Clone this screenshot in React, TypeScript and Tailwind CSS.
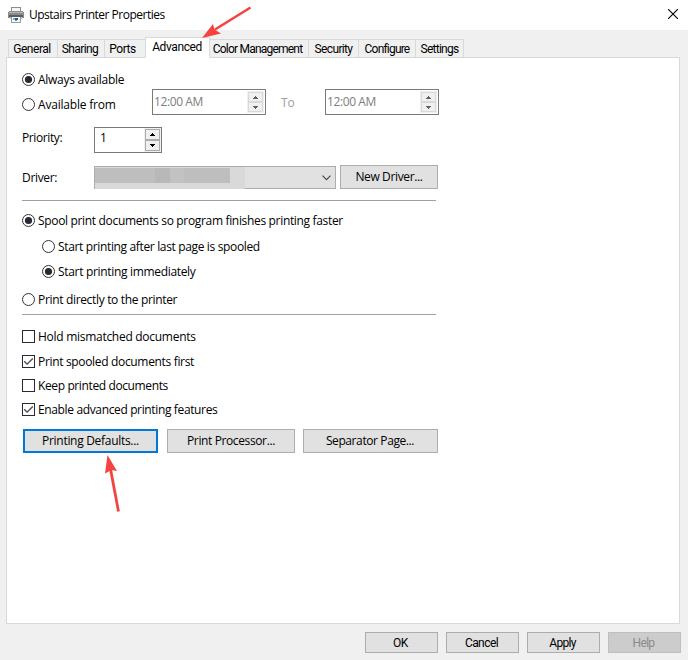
import type { ReactNode } from "react";
import clsx from "clsx";

const tabs = [
    { label: "General", width: "w-[50px]", text: "tracking-[-0.45px] pr-0.5" },
    { label: "Sharing", width: "w-[48px]", text: "tracking-[-0.6px] pr-0.5" },
    { label: "Ports", width: "w-[42px]", text: "tracking-[-0.5px] pr-[5px]" },
    { label: "Advanced", width: "w-[65px]", text: "tracking-[-0.4px] pr-px pb-0.5", active: true },
    { label: "Color Management", width: "w-[100px]", text: "tracking-[-0.78px] pr-[3px]" },
    { label: "Security", width: "w-[51px]", text: "tracking-[-0.65px]" },
    { label: "Configure", width: "w-[58px]", text: "tracking-[-0.8px]" },
    { label: "Settings", width: "w-[49px]", text: "tracking-[-0.75px]" },
];

const footerButtons = [
    { label: "OK", disabled: false, text: "tracking-[-0.4px]" },
    { label: "Cancel", disabled: false, text: "tracking-[-0.55px]" },
    { label: "Apply", disabled: false, text: "tracking-[-0.7px]" },
    { label: "Help", disabled: true, text: "tracking-[-0.7px]" },
];

function PrinterIcon() {
    return (
        <svg width="16" height="16" viewBox="0 0 16 16" className="shrink-0" shapeRendering="crispEdges">
            <path d="M3 0h10v5H3z" fill="#8c8c8c" />
            <path d="M4 1h8v4H4z" fill="#f4f4f4" />
            <path d="M1 4h14v1H1zM0 5h16v6H0z" fill="#8b8d8c" />
            <path d="M1 5h14v1H1z" fill="#b4b6b5" />
            <path d="M1 8h14v2H1z" fill="#5c5e5e" />
            <path d="M2 10h12v2H2z" fill="#c3c5c5" />
            <path d="M3 10h10v6H3z" fill="#9a9c9c" />
            <path d="M4 10h8v5H4z" fill="#f7fafc" />
            <path d="M5 11h3v2H5z" fill="#63b5e8" />
            <path d="M7 11h3v2H7z" fill="#1d5f9e" />
            <path d="M7 13h2v1H7z" fill="#6f9c6a" />
        </svg>
    );
}

function Radio({ label, checked, className }: { label: string; checked?: boolean; className?: string }) {
    return (
        <label className="flex h-[13px] items-center gap-[3px]">
            <svg width="13" height="13" viewBox="0 0 13 13" className="shrink-0">
                <circle cx="6.5" cy="6.5" r="6" fill="#fff" stroke="#333" />
                {checked && <circle cx="6.5" cy="6.5" r="3.6" fill="#2b2733" />}
            </svg>
            <span className={clsx("leading-[13px] whitespace-nowrap", className)}>{label}</span>
        </label>
    );
}

function Checkbox({ label, checked, className }: { label: string; checked?: boolean; className?: string }) {
    return (
        <label className="flex h-[13px] items-center gap-[3px]">
            <svg width="13" height="13" viewBox="0 0 13 13" className="shrink-0">
                <rect x="0.5" y="0.5" width="12" height="12" fill="#fff" stroke="#2b2733" />
                {checked && <path d="M2.2 6.3l2.9 2.9 5.7-5.7" fill="none" stroke="#444" strokeWidth="1.3" />}
            </svg>
            <span className={clsx("leading-[13px] whitespace-nowrap", className)}>{label}</span>
        </label>
    );
}

function Spinner({ disabled }: { disabled?: boolean }) {
    const button = clsx(
        "flex items-center justify-center border bg-[#f0f0f0]",
        disabled ? "border-[#d9d9d9]" : "border-[#acacac]",
    );
    const color = disabled ? "#606060" : "#000";
    return (
        <div className="grid h-full w-[17px] grid-rows-2 bg-[#f0f0f0] p-px">
            <div className={button}>
                <svg width="5" height="3" viewBox="0 0 5 3" shapeRendering="crispEdges">
                    <path d="M2 0h1v1h1v1h1v1H0V2h1V1h1z" fill={color} />
                </svg>
            </div>
            <div className={button}>
                <svg width="5" height="3" viewBox="0 0 5 3" shapeRendering="crispEdges">
                    <path d="M0 0h5v1H4v1H3v1H2V2H1V1H0z" fill={color} />
                </svg>
            </div>
        </div>
    );
}

function TimeField() {
    return (
        <div className="flex h-[26px] w-[114px] justify-between border border-[#7a7a7a] bg-white p-px text-[#7d7d7d]">
            <span className="leading-[22px] tracking-[-0.4px]">12:00 AM</span>
            <Spinner disabled />
        </div>
    );
}

function Button({ children, className }: { children: ReactNode; className?: string }) {
    return (
        <button
            className={clsx(
                "flex h-6 items-center justify-center bg-[#e1e1e1] whitespace-nowrap",
                className,
            )}
        >
            {children}
        </button>
    );
}

export default function App() {
    return (
        <div className="relative flex h-[660px] w-[688px] flex-col overflow-hidden bg-[#f0f0f0] font-['Open_Sans','Noto_Sans',sans-serif] text-[12px] text-black">
            <header className="flex h-[30px] shrink-0 items-start justify-between bg-white pt-[6px] pr-[10px] pl-2">
                <div className="flex items-center gap-[5px]">
                    <PrinterIcon />
                    <h1 className="pt-px leading-4 tracking-[-0.5px]">Upstairs Printer Properties</h1>
                </div>
                <svg width="10" height="10" viewBox="0 0 10 10" className="mt-[3px]">
                    <path d="M0 0l10 10M10 0L0 10" stroke="#000" strokeWidth="1.1" />
                </svg>
            </header>

            {/* Tab strip, the active tab covers the panel's top border */}
            <nav className="z-10 -mb-px flex h-7 shrink-0 items-end pl-2 font-['Roboto',sans-serif]">
                {tabs.map((tab) => (
                    <div
                        key={tab.label}
                        className={clsx(
                            "-mr-px flex shrink-0 items-center justify-center border border-[#d9d9d9] whitespace-nowrap",
                            tab.active ? "z-10 h-[21px] border-b-white bg-white" : "h-[19px] bg-[#f0f0f0]",
                            tab.width,
                            tab.text,
                        )}
                    >
                        {tab.label}
                    </div>
                ))}
            </nav>

            <main className="ml-[6px] h-[567px] w-[674px] shrink-0 border border-[#d9d9d9] bg-white pl-[15px]">
                <div className="flex h-[57px] pt-[15px]">
                    <div className="flex w-[130px] flex-col gap-3">
                        <Radio label="Always available" checked className="tracking-[-0.27px]" />
                        <Radio label="Available from" className="tracking-[-0.2px]" />
                    </div>
                    <div className="flex items-center gap-[15px] pt-4">
                        <TimeField />
                        <span className="w-[29px] pt-px text-[#a0a0a0]">To</span>
                        <TimeField />
                    </div>
                </div>

                <div className="mt-3 flex h-[26px]">
                    <span className="w-[72px] leading-[22px] tracking-[-0.4px]">Priority:</span>
                    <div className="flex h-[26px] w-[68px] justify-between border border-[#7a7a7a] pl-[5px]">
                        <span className="leading-5">1</span>
                        <Spinner />
                    </div>
                </div>

                <div className="mt-3 flex h-6 items-end">
                    <span className="w-[72px] leading-[23px] tracking-[-0.33px]">Driver:</span>
                    <div className="mr-1 flex h-[23px] w-[242px]">
                        {/* Masked driver name */}
                        <div className="h-[23px] w-[151px] border-t border-l border-[#adadad] bg-[#d9d9d9] pt-px">
                            <div className="flex h-[15px] w-[135px] bg-[#bebebe] pl-[60px]">
                                <div className="w-[15px] bg-[#b8b8b8]" />
                                <div className="w-[14px] bg-[#c2c2c2]" />
                            </div>
                        </div>
                        <div className="flex flex-1 items-center justify-end border border-l-0 border-[#adadad] bg-[#e1e1e1] pr-1">
                            <svg width="9" height="6" viewBox="0 0 9 6">
                                <path d="M0.5 0.7l4 4 4-4" fill="none" stroke="#444" strokeWidth="1.1" />
                            </svg>
                        </div>
                    </div>
                    <Button className="w-[98px] border border-[#adadad] tracking-[-0.36px]">New Driver...</Button>
                </div>

                <div className="mt-[11px] h-px w-[414px] bg-[#a0a0a0]" />

                <div className="mt-[13px]">
                    <Radio label="Spool print documents so program finishes printing faster" checked className="tracking-[-0.33px]" />
                    <div className="mt-[13px] flex flex-col gap-3 pl-5">
                        <Radio label="Start printing after last page is spooled" className="tracking-[-0.35px]" />
                        <Radio label="Start printing immediately" checked className="tracking-[-0.32px]" />
                    </div>
                    <div className="mt-[15px]">
                        <Radio label="Print directly to the printer" className="tracking-[-0.33px]" />
                    </div>
                </div>

                <div className="mt-2 h-px w-[414px] bg-[#a0a0a0]" />

                <div className="mt-[15px] flex flex-col gap-[11px]">
                    <div className="mb-px">
                        <Checkbox label="Hold mismatched documents" className="tracking-[-0.28px]" />
                    </div>
                    <Checkbox label="Print spooled documents first" checked className="tracking-[-0.33px]" />
                    <Checkbox label="Keep printed documents" className="tracking-[-0.38px]" />
                    <Checkbox label="Enable advanced printing features" checked className="tracking-[-0.36px]" />
                </div>

                <div className="mt-[13px] flex pl-px">
                    <Button className="mr-[9px] w-[135px] border-2 border-[#0078d7] tracking-[-0.3px]">Printing Defaults...</Button>
                    <Button className="mr-2 w-[128px] border border-[#adadad] tracking-[-0.38px]">Print Processor...</Button>
                    <Button className="w-[135px] border border-[#adadad] pr-px tracking-[-0.4px]">Separator Page...</Button>
                </div>
            </main>

            <footer className="mt-2 flex gap-2 pl-[365px] font-['Roboto',sans-serif]">
                {footerButtons.map((b) => (
                    <button
                        key={b.label}
                        disabled={b.disabled}
                        className={clsx(
                            "h-[21px] w-[73px] border pt-px pr-0.5 leading-[18px]",
                            b.disabled
                                ? "border-[#bfbfbf] bg-[#cccccc] text-[#8f8a8a]"
                                : "border-[#adadad] bg-[#e1e1e1]",
                            b.text,
                        )}
                    >
                        {b.label}
                    </button>
                ))}
            </footer>

            {/* Callout arrows drawn over the dialog */}
            <svg className="pointer-events-none absolute top-[6px] left-[201px] z-20" width="52" height="34" viewBox="0 0 52 34">
                <path d="M49.5 1.5L14 23.5" stroke="#f44340" strokeWidth="2.6" />
                <path d="M1 32L12 18L13.5 23.5L20 27.5z" fill="#f44340" />
            </svg>
            <svg className="pointer-events-none absolute top-[454px] left-[103px] z-20" width="20" height="60" viewBox="0 0 20 60">
                <path d="M15.5 57.5L7.5 15" stroke="#f44340" strokeWidth="2.8" />
                <path d="M4.5 1L14 17L8.500 16L2 19.5z" fill="#f44340" />
            </svg>
        </div>
    );
}
